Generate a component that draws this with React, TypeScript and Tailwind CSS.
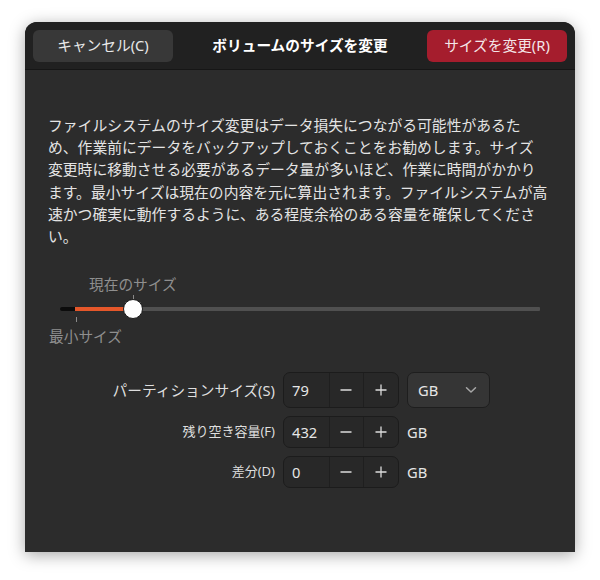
import React from "react";

const font = { fontFamily: '"Noto Sans", "Noto Sans CJK JP", sans-serif' };

function MinusIcon() {
  return (
    <svg width="14" height="14" viewBox="0 0 14 14">
      <line x1="1.5" y1="7" x2="12.5" y2="7" stroke="#dcdcdc" strokeWidth="1.3" />
    </svg>
  );
}
function PlusIcon() {
  return (
    <svg width="14" height="14" viewBox="0 0 14 14">
      <line x1="1.5" y1="7" x2="12.5" y2="7" stroke="#dcdcdc" strokeWidth="1.3" />
      <line x1="7" y1="1.5" x2="7" y2="12.5" stroke="#dcdcdc" strokeWidth="1.3" />
    </svg>
  );
}
function Chevron() {
  return (
    <svg width="12" height="8" viewBox="0 0 12 8">
      <path d="M1.5 1.8 L6 6 L10.5 1.8" fill="none" stroke="#a8a8a8" strokeWidth="1.5" strokeLinecap="round" strokeLinejoin="round" />
    </svg>
  );
}

function Spin({ value, tall }: { value: string; tall?: boolean }) {
  return (
    <div
      className={`flex ${tall ? "h-[36px]" : "h-[32px]"} w-[116px] rounded-[7px] border border-[#1c1c1c] bg-[#282828] overflow-hidden`}
    >
      <div className="flex w-[45px] items-center pl-[8px] text-[14.7px] text-[#e6e6e6]">{value}</div>
      <div className="flex w-[35px] items-center justify-center border-l border-[#1f1f1f]">
        <MinusIcon />
      </div>
      <div className="flex w-[35px] items-center justify-center border-l border-[#1f1f1f]">
        <PlusIcon />
      </div>
    </div>
  );
}

export default function App() {
  const lines = [
    "ファイルシステムのサイズ変更はデータ損失につながる可能性があるた",
    "め、作業前にデータをバックアップしておくことをお勧めします。サイズ",
    "変更時に移動させる必要があるデータ量が多いほど、作業に時間がかかり",
    "ます。最小サイズは現在の内容を元に算出されます。ファイルシステムが高",
    "速かつ確実に動作するように、ある程度余裕のある容量を確保してくださ",
    "い。",
  ];
  return (
    <div className="w-[600px] h-[580px] bg-white pt-[22px] pl-[25px]" style={font}>
      <div className="flex h-[530px] w-[550px] flex-col overflow-hidden rounded-t-[12px] bg-[#2c2c2c] shadow-[0_3px_16px_rgba(0,0,0,0.35)]">
        {/* header */}
        <div className="flex h-[48px] items-center justify-between border-b border-[#161616] bg-[#212121] px-[8px]">
          <div className="flex h-[32px] w-[140px] items-center justify-center rounded-[6px] bg-[#383838] text-[14.7px] text-[#e8e8e8]">
            キャンセル(C)
          </div>
          <div className="text-[14.7px] font-bold text-white">ボリュームのサイズを変更</div>
          <div className="flex h-[32px] w-[140px] items-center justify-center rounded-[6px] bg-[#a51d2d] text-[14.7px] text-[#f4e6e8]">
            サイズを変更(R)
          </div>
        </div>

        {/* body */}
        <div className="flex flex-col px-[23px] pt-[44px]">
          <div className="text-[14.8px] leading-[22.2px] text-[#e4e4e4]">
            {lines.map((l, i) => (
              <div key={i} className="whitespace-nowrap">
                {l}
              </div>
            ))}
          </div>

          {/* slider */}
          <div className="relative mt-[27px] h-[72px] text-[14.7px] leading-[20px] text-[#8f8f8f]">
            <div className="absolute left-[41px] top-0 whitespace-nowrap">現在のサイズ</div>
            <div className="absolute left-[85px] top-[21px] h-[5px] w-px bg-[#8a8a8a]" />
            <div className="absolute left-[12px] right-[12px] top-[33px] flex h-[4px]">
              <div className="h-full w-[15px] rounded-l-full bg-[#0c0c0c]" />
              <div className="h-full w-[58px] bg-[#e5572a]" />
              <div className="h-full flex-1 rounded-r-[1px] bg-[#505050]" />
            </div>
            <div className="absolute left-[75px] top-[25px] h-[20px] w-[20px] rounded-full border border-[#1a1a1a] bg-white" />
            <div className="absolute left-[28px] top-[43px] h-[5px] w-px bg-[#8a8a8a]" />
            <div className="absolute left-[1px] top-[52px] whitespace-nowrap">最小サイズ</div>
          </div>

          {/* form */}
          <div className="mt-[26px] flex flex-col gap-[8px]">
            <div className="flex h-[36px] items-center gap-[8px]">
              <div className="w-[227px] text-right text-[14.7px] text-[#dedede]">パーティションサイズ(S)</div>
              <Spin value="79" tall />
              <div className="flex h-[36px] w-[83px] items-center justify-between rounded-[7px] border border-[#1e1e1e] bg-[#353535] pl-[10px] pr-[12px] text-[14.7px] text-[#e6e6e6]">
                <span>GB</span>
                <Chevron />
              </div>
            </div>
            <div className="flex h-[32px] items-center gap-[8px]">
              <div className="w-[227px] text-right text-[13px] text-[#dedede]">残り空き容量(F)</div>
              <Spin value="432" />
              <div className="text-[14.7px] text-[#e6e6e6]">GB</div>
            </div>
            <div className="flex h-[32px] items-center gap-[8px]">
              <div className="w-[227px] text-right text-[13px] text-[#dedede]">差分(D)</div>
              <Spin value="0" />
              <div className="text-[14.7px] text-[#e6e6e6]">GB</div>
            </div>
          </div>
        </div>
      </div>
    </div>
  );
}
